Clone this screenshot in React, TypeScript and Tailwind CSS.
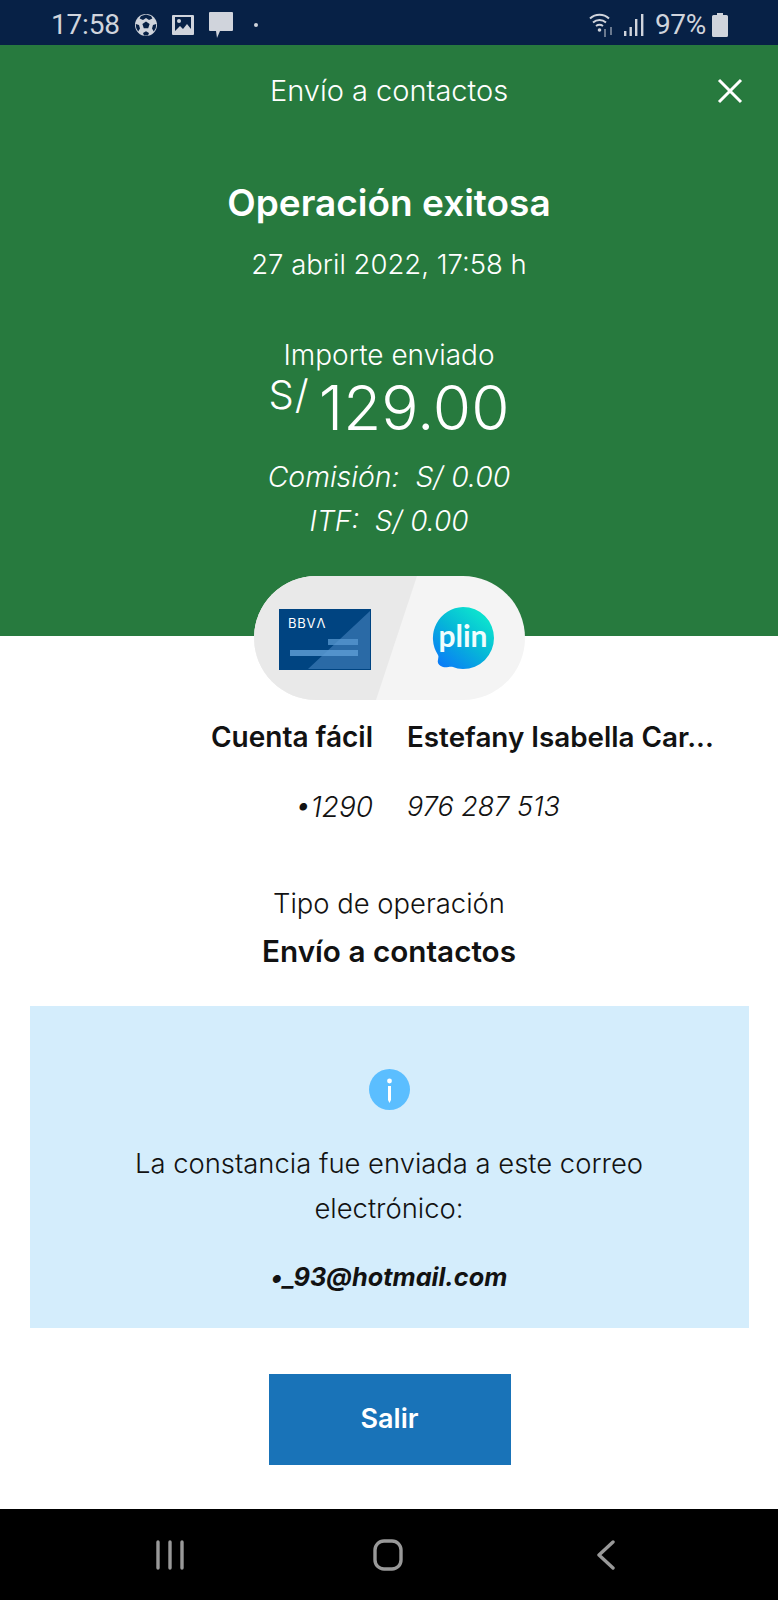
const font = "font-['Inter','Liberation_Sans',sans-serif]";

const StatusBar = () => {
  return (
    <div className="h-[45px] bg-[#072146] flex items-center justify-between pt-[4px] pl-[51px] pr-[50px] text-[#d0d4dc] font-['Roboto',sans-serif]">
      <div className="flex items-center">
        <span className="text-[28px] leading-none tracking-[-0.2px]">17:58</span>
        <svg className="ml-[14px]" width="24" height="24" viewBox="0 0 24 24">
          <circle cx="12" cy="12" r="11" fill="#d0d4dc" />
          <path d="M12 8.5l3.6 2.6-1.4 4.2H9.8L8.4 11.1zM12 1.5v3.5l-3 2-3.4-1.5L7 3zM12 1.5v3.5l3 2 3.4-1.5L17 3zM1.8 11l3.2 1 1 3.6-1.8 2.8A10 10 0 0 1 1.8 11zM22.2 11l-3.2 1-1 3.6 1.8 2.8A10 10 0 0 0 22.2 11zM9 20l3-1.8L15 20l-1 2.4h-4z" fill="#072146" />
        </svg>
        <svg className="ml-[14px]" width="22" height="22" viewBox="0 0 22 22">
          <path d="M0 2a1 1 0 0 1 1-1h20a1 1 0 0 1 1 1v18a1 1 0 0 1-1 1H1a1 1 0 0 1-1-1z" fill="#d0d4dc" />
          <path d="M3 3h16v12l-4-5-4 5-3-3-5 5z" fill="#072146" />
          <circle cx="7" cy="7" r="2" fill="#d0d4dc" />
        </svg>
        <svg className="ml-[14px]" width="26" height="28" viewBox="0 0 26 28">
          <path d="M2 1h22a1 1 0 0 1 1 1v17a1 1 0 0 1-1 1H12l-3 7-1-7H2a1 1 0 0 1-1-1V2a1 1 0 0 1 1-1z" fill="#d0d4dc" />
        </svg>
        <span className="ml-[20px] w-[4px] h-[4px] rounded-full bg-[#d0d4dc]" />
      </div>
      <div className="flex items-center">
        <svg width="28" height="28" viewBox="0 0 28 28" fill="none" stroke="#d0d4dc" strokeWidth="2">
          <path d="M1 7.5a14 14 0 0 1 19 0M4 11.5a10 10 0 0 1 13 0M7 15a6 6 0 0 1 7 0" />
          <circle cx="10.5" cy="19" r="1.8" fill="#d0d4dc" stroke="none" />
          <path d="M16 18v8M22 16v8" stroke="#8c97a8" strokeWidth="1.5" />
        </svg>
        <svg className="ml-[7px]" width="20" height="24" viewBox="0 0 20 24" fill="#d0d4dc">
          <rect x="0" y="18" width="2.4" height="5" />
          <rect x="5.5" y="14" width="2.4" height="9" />
          <rect x="11" y="6" width="2.4" height="17" />
          <rect x="17" y="1" width="2.4" height="22" />
        </svg>
        <span className="ml-[11px] text-[28px] leading-none tracking-[-0.3px]">97%</span>
        <svg className="ml-[6px]" width="16" height="24" viewBox="0 0 16 24" fill="#d0d4dc">
          <path d="M5 0h6v2h3.5a1.5 1.5 0 0 1 1.5 1.5v19a1.5 1.5 0 0 1-1.5 1.5h-13A1.5 1.5 0 0 1 0 22.5v-19A1.5 1.5 0 0 1 1.5 2H5z" />
        </svg>
      </div>
    </div>
  );
};

const CardLogo = () => {
  return (
    <svg width="92" height="61" viewBox="0 0 92 61">
      <rect width="92" height="61" fill="#004481" />
      <path d="M91 2v58H29z" fill="#2a6aa6" />
      <rect x="49" y="30" width="30" height="6" fill="#5a9ad2" opacity="0.75" />
      <rect x="11" y="41" width="68" height="6" fill="#5a9ad2" opacity="0.85" />
      <text x="9" y="19" fill="#fff" fontSize="13" fontFamily="Inter, sans-serif" fontWeight="400" letterSpacing="0.8">BBVΛ</text>
    </svg>
  );
};

const PlinLogo = () => {
  return (
    <svg width="64" height="64" viewBox="0 0 64 64">
      <defs>
        <linearGradient id="plin" x1="0.15" y1="0.95" x2="0.8" y2="0.15">
          <stop offset="0" stopColor="#0a7df7" />
          <stop offset="0.55" stopColor="#06b6d8" />
          <stop offset="1" stopColor="#0ce0cf" />
        </linearGradient>
      </defs>
      <path d="M32 1a31 31 0 0 1 0 62c-4 0-7-1-10-2-3-1-6 1-10 0-4-1-6-4-5-7 0-2 1-3 0-5A31 31 0 0 1 32 1z" fill="url(#plin)" />
      <text x="32" y="41" textAnchor="middle" fill="#f0fdfd" fontSize="30" fontWeight="700" fontFamily="Lato, sans-serif">plin</text>
    </svg>
  );
};

const App = () => {
  return (
    <div className={`w-[778px] h-[1600px] flex flex-col bg-white ${font}`}>
      <StatusBar />

      <div className="h-[591px] bg-[#277a3e] text-white flex flex-col items-center">
        <div className="relative w-full pt-[27px] text-center text-[29px] leading-[38px] font-light">
          Envío a contactos
          <svg className="absolute right-[34px] top-[32px]" width="28" height="28" viewBox="0 0 28 28" stroke="#fff" strokeWidth="3">
            <path d="M3 3l22 22M25 3L3 25" />
          </svg>
        </div>
        <div className="mt-[71px] text-[37px] leading-[44px] font-semibold">Operación exitosa</div>
        <div className="mt-[21px] text-[27.5px] leading-[36px] font-light">27 abril 2022, 17:58 h</div>
        <div className="mt-[55px] text-[28px] leading-[36px] font-light">Importe enviado</div>
        <div className="flex items-start font-light">
          <span className="mt-[2px] mr-[9px] text-[40px] leading-[40px] tracking-[1px]">S/</span>
          <span className="text-[62px] leading-[70px]">129.00</span>
        </div>
        <div className="mt-[11px] text-[28.4px] leading-[45px] italic font-light">Comisión:&nbsp; S/ 0.00</div>
        <div className="text-[28px] leading-[45px] italic font-light">ITF:&nbsp; S/ 0.00</div>
      </div>

      <div className="flex-1 flex flex-col items-center text-[#121212]">
        <div className="-mt-[60px] w-[271px] h-[124px] rounded-full flex overflow-hidden bg-[#f4f4f4]">
          <div className="relative w-full flex items-center justify-between pl-[25px] pr-[30px]">
            <svg className="absolute left-0 top-0" width="176" height="124" viewBox="0 0 176 124">
              <path d="M0 0H163L122 124H0z" fill="#e9e9e9" />
            </svg>
            <div className="relative mt-[3px]"><CardLogo /></div>
            <div className="relative"><PlinLogo /></div>
          </div>
        </div>

        <div className="mt-[19px] w-full grid grid-cols-[373px_1fr] gap-x-[34px] gap-y-[34px] leading-[36px]">
          <div className="text-right text-[28px] font-semibold">Cuenta fácil</div>
          <div className="text-[27.8px] font-semibold whitespace-nowrap">Estefany Isabella Car...</div>
          <div className="text-right text-[28px] italic font-light">•1290</div>
          <div className="text-[27px] italic font-light">976 287 513</div>
        </div>

        <div className="mt-[60px] text-[27.4px] leading-[36px] font-light">Tipo de operación</div>
        <div className="mt-[12px] text-[29.7px] leading-[36px] font-semibold">Envío a contactos</div>

        <div className="mt-[37px] w-[719px] h-[322px] bg-[#d4edfc] flex flex-col items-center pt-[63px]">
          <svg width="41" height="41" viewBox="0 0 41 41">
            <circle cx="20.5" cy="20.5" r="20.5" fill="#5bbeff" />
            <circle cx="20.5" cy="12" r="2.4" fill="#fff" />
            <path d="M19 17h3v14l-1.5 3-1.5-3z" fill="#fff" />
          </svg>
          <div className="mt-[31px] text-center text-[27.4px] leading-[45px] font-light">
            La constancia fue enviada a este correo
            <br />
            electrónico:
          </div>
          <div className="mt-[23px] text-[25.3px] leading-[45px] font-bold italic">•_93@hotmail.com</div>
        </div>

        <button className="mt-[46px] ml-[1px] w-[242px] h-[91px] bg-[#1973b8] text-white text-[27px] font-semibold">Salir</button>
      </div>

      <div className="h-[91px] bg-black flex items-center justify-between pl-[156px] pr-[163px]">
        <svg width="28" height="30" viewBox="0 0 28 30" stroke="#999" strokeWidth="3.4" strokeLinecap="round">
          <path d="M2 2v26M14 2v26M26 2v26" />
        </svg>
        <svg className="mr-[6px]" width="30" height="32" viewBox="0 0 30 32" fill="none" stroke="#999" strokeWidth="3.4">
          <rect x="2" y="2" width="26" height="28" rx="9" />
        </svg>
        <svg width="18" height="30" viewBox="0 0 18 30" fill="none" stroke="#999" strokeWidth="3.4" strokeLinecap="round" strokeLinejoin="round">
          <path d="M16 2L2 15l14 13" />
        </svg>
      </div>
    </div>
  );
};

export default App;
